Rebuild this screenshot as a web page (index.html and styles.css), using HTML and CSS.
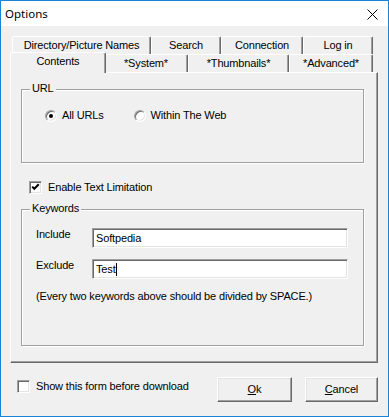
FILE: index.html
```html
<!DOCTYPE html>
<html>
<head>
<meta charset="utf-8">
<title>Options</title>
<link rel="stylesheet" href="styles.css">
</head>
<body>
<div class="window">
  <div class="titlebar">
    <span class="title">Options</span>
    <svg class="close" width="11" height="11" viewBox="0 0 11 11"><path d="M0.5 0.5 L10.5 10.5 M10.5 0.5 L0.5 10.5" stroke="#000" stroke-width="1" fill="none"/></svg>
  </div>
  <div class="client">
    <div class="tabs">
      <div class="tabrow">
        <div class="tab w-dir">Directory/Picture Names</div>
        <div class="tab w-search">Search</div>
        <div class="tab w-conn">Connection</div>
        <div class="tab w-log">Log in</div>
      </div>
      <div class="tabrow front">
        <div class="tab selected w-contents">Contents</div>
        <div class="tab w-system">*System*</div>
        <div class="tab w-thumb">*Thumbnails*</div>
        <div class="tab w-adv">*Advanced*</div>
      </div>
    </div>
    <div class="panel">
      <div class="group url">
        <span class="legend">URL</span>
        <div class="radios">
          <label class="radio"><span class="radio-dot on"></span><span>All URLs</span></label>
          <label class="radio"><span class="radio-dot"></span><span>Within The Web</span></label>
        </div>
      </div>
      <label class="check limit"><span class="box"><svg width="9" height="9" viewBox="0 0 9 9"><path d="M1.2 3.6 L3.3 5.8 L7.8 1.2" stroke="#000" stroke-width="2" fill="none"/></svg></span><span>Enable Text Limitation</span></label>
      <div class="group keywords">
        <span class="legend">Keywords</span>
        <div class="field-row">
          <span class="field-label">Include</span>
          <div class="field"><span>Softpedia</span></div>
        </div>
        <div class="field-row">
          <span class="field-label">Exclude</span>
          <div class="field"><span>Test</span><span class="caret"></span></div>
        </div>
        <p class="note">(Every two keywords above should be divided by SPACE.)</p>
      </div>
    </div>
    <div class="footer">
      <label class="check show"><span class="box"></span><span>Show this form before download</span></label>
      <div class="buttons">
        <button class="btn ok"><u>O</u>k</button>
        <button class="btn cancel"><u>C</u>ancel</button>
      </div>
    </div>
  </div>
</div>
</body>
</html>
```

FILE: styles.css
```css
* { box-sizing: border-box; }
html, body { margin: 0; padding: 0; }
body {
  width: 389px;
  height: 417px;
  overflow: hidden;
  background: #fff;
  font-family: "Liberation Sans", Arial, sans-serif;
  font-size: 11px;
  letter-spacing: -0.15px;
  color: #000;
}
.window {
  width: 389px;
  height: 417px;
  border: 1px solid #1883d7;
  display: flex;
  flex-direction: column;
  background: #f0f0f0;
}
.titlebar {
  height: 25px;
  background: #fff;
  display: flex;
  align-items: center;
  padding-left: 4px;
  flex: none;
}
.title {
  font-family: "Noto Sans", "Open Sans", sans-serif;
  font-size: 11.5px;
  letter-spacing: 0;
  line-height: 14px;
  margin-top: 1px;
}
.close {
  margin-left: auto;
  margin-right: 10px;
  margin-top: 1px;
}
.client {
  flex: 1;
  padding: 10px 10px 0 9px;
  display: flex;
  flex-direction: column;
}
.tabs { display: flex; flex-direction: column; }
.tabrow {
  display: flex;
  height: 18px;
  margin-left: 2px;
  align-items: flex-end;
}
.tab {
  height: 18px;
  line-height: 16px;
  text-align: center;
  white-space: nowrap;
  background: #f0f0f0;
  border-top: 1px solid #fff;
  border-left: 1px solid #fff;
  border-right: 1px solid #696969;
  box-shadow: inset -1px 0 #a0a0a0;
  border-radius: 2px 2px 0 0;
  flex: none;
}
.w-dir { width: 139px; }
.w-search { width: 70px; }
.w-conn { width: 82px; }
.w-log { width: 70px; }
.w-system { width: 84px; }
.w-thumb { width: 101px; }
.w-adv { width: 84px; }
.tab.selected {
  width: 96px;
  height: 21px;
  margin: 0 -2px -1px -2px;
  line-height: 17px;
  position: relative;
  z-index: 2;
}
.panel {
  width: 368px;
  height: 291px;
  border-top: 1px solid #fff;
  border-left: 1px solid #fff;
  border-right: 1px solid #696969;
  border-bottom: 1px solid #696969;
  box-shadow: inset -1px -1px #a0a0a0;
  padding: 16px 0 0 10px;
  position: relative;
  z-index: 1;
}
.group {
  position: relative;
  width: 343px;
  border: 1px solid #a0a0a0;
  box-shadow: inset 1px 1px #fff, 1px 1px #fff;
}
.legend {
  position: absolute;
  top: -8px;
  left: 8px;
  padding: 0 2px;
  background: #f0f0f0;
  line-height: 13px;
}
.group.url { height: 74px; }
.radios {
  display: flex;
  padding: 19px 0 0 23px;
  gap: 30px;
}
.radio {
  display: flex;
  align-items: center;
  gap: 5px;
  line-height: 13px;
}
.radio-dot {
  width: 12px;
  height: 12px;
  border-radius: 50%;
  background: #fff;
  border: 1px solid;
  border-color: #a0a0a0 #fff #fff #a0a0a0;
  box-shadow: inset 1px 1px #696969, inset -1px -1px #e3e3e3;
  position: relative;
  flex: none;
}
.radio-dot.on::after {
  content: "";
  position: absolute;
  left: 3px;
  top: 3px;
  width: 4px;
  height: 4px;
  border-radius: 50%;
  background: #000;
}
.check {
  display: flex;
  align-items: center;
  gap: 6px;
  line-height: 13px;
}
.box {
  width: 13px;
  height: 13px;
  background: #fff;
  border: 1px solid;
  border-color: #a0a0a0 #fff #fff #a0a0a0;
  box-shadow: inset 1px 1px #696969, inset -1px -1px #e3e3e3;
  display: flex;
  align-items: center;
  justify-content: center;
  flex: none;
}
.box svg { display: block; }
.check.limit {
  margin: 18px 0 0 8px;
}
.group.keywords {
  height: 137px;
  margin-top: 15px;
  padding: 18px 0 0 14px;
}
.field-row {
  display: flex;
  align-items: flex-start;
  height: 20px;
  margin-bottom: 11px;
}
.field-label {
  width: 56px;
  line-height: 13px;
}
.field {
  width: 256px;
  height: 20px;
  background: #fff;
  border: 1px solid;
  border-color: #a0a0a0 #fff #fff #a0a0a0;
  box-shadow: inset 1px 1px #696969, inset -1px -1px #e3e3e3;
  display: flex;
  align-items: center;
  padding-left: 3px;
  line-height: 13px;
}
.caret {
  width: 1px;
  height: 13px;
  background: #000;
}
.note {
  margin: 1px 0 0 0;
  line-height: 13px;
}
.footer {
  display: flex;
  align-items: flex-start;
  margin-top: 14px;
}
.check.show { margin: 3px 0 0 7px; }
.buttons {
  margin-left: auto;
  display: flex;
  gap: 13px;
}
.btn {
  height: 25px;
  background: #f0f0f0;
  font-family: "Liberation Sans", Arial, sans-serif;
  font-size: 11px;
  letter-spacing: -0.15px;
  color: #000;
  border: 1px solid;
  border-color: #fff #696969 #696969 #fff;
  box-shadow: inset -1px -1px #a0a0a0, inset 1px 1px #e3e3e3;
  padding: 0;
  line-height: 13px;
}
.btn u { text-underline-offset: 1px; }
.ok { width: 75px; }
.cancel { width: 73px; }
```
